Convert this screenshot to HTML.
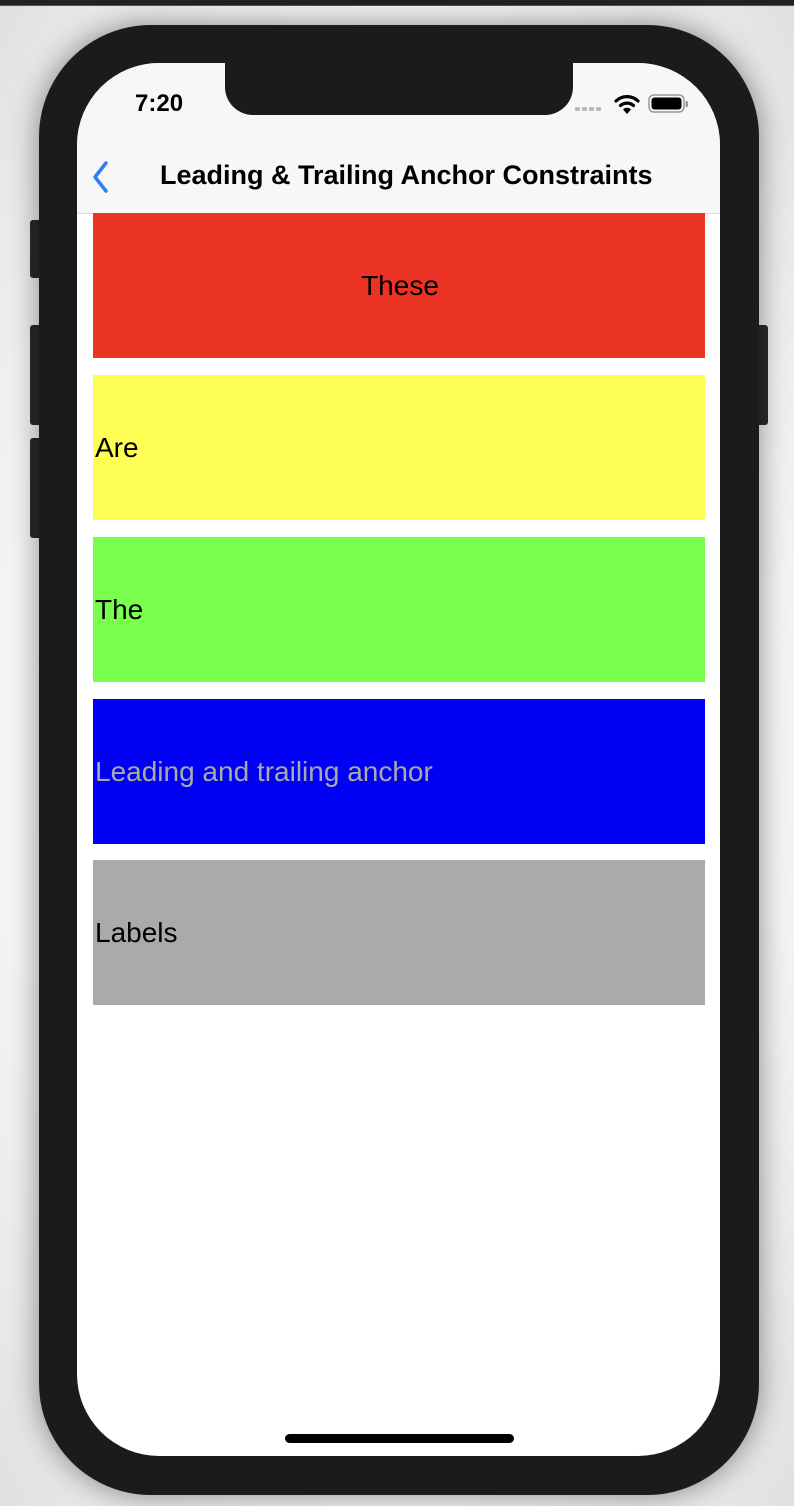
<!DOCTYPE html>
<html><head><meta charset="utf-8"><style>
html,body{margin:0;padding:0;}
body{width:794px;height:1506px;position:relative;overflow:hidden;background:radial-gradient(ellipse at center,#fff 55%,#e0e0e0 100%);font-family:"Liberation Sans",sans-serif;}
.top{position:absolute;left:0;top:0;width:794px;height:5px;background:#222;border-bottom:1px solid #555;}
.btn{position:absolute;background:#2a2a2a;border-radius:3px;}
.phone{position:absolute;left:39px;top:25px;width:720px;height:1470px;background:#1b1b1b;border-radius:112px;box-shadow:0 0 30px rgba(0,0,0,.45);}
.screen{position:absolute;left:77px;top:63px;width:643px;height:1393px;background:#fff;border-radius:82px;overflow:hidden;}
.nav{position:absolute;left:0;top:0;width:643px;height:150px;background:#f7f7f7;border-bottom:1px solid #ddd;}
.notch{position:absolute;left:148px;top:0;width:348px;height:52px;background:#1b1b1b;border-radius:0 0 28px 28px;}
.time{position:absolute;left:58px;top:27px;font-size:24px;font-weight:bold;color:#000;}
.title{position:absolute;left:83px;top:97px;font-size:27px;font-weight:bold;color:#000;white-space:nowrap;}
.box{position:absolute;left:16px;width:612px;height:145px;font-size:28px;display:flex;align-items:center;box-sizing:border-box;padding-left:2px;}
.home{position:absolute;left:208px;top:1371px;width:229px;height:9px;background:#000;border-radius:5px;}
</style></head><body>
<div class="top"></div>
<div class="btn" style="left:30px;top:220px;width:12px;height:58px"></div>
<div class="btn" style="left:30px;top:325px;width:12px;height:100px"></div>
<div class="btn" style="left:30px;top:438px;width:12px;height:100px"></div>
<div class="btn" style="left:756px;top:325px;width:12px;height:100px"></div>
<div class="phone"></div>
<div class="screen">
<div class="nav"></div>
<div class="notch"></div>
<div class="time">7:20</div>
<svg style="position:absolute;left:498px;top:43px" width="30" height="6"><g fill="#bbb"><rect x="0" y="1" width="5" height="4" rx="1"/><rect x="7" y="1" width="5" height="4" rx="1"/><rect x="14" y="1" width="5" height="4" rx="1"/><rect x="21" y="1" width="5" height="4" rx="1"/></g></svg>
<svg style="position:absolute;left:537px;top:30px" width="26" height="22" viewBox="0 0 26 22"><path d="M2 8 A16 16 0 0 1 24 8" stroke="#000" stroke-width="3.2" fill="none" stroke-linecap="round"/><path d="M6.5 12.5 A10 10 0 0 1 19.5 12.5" stroke="#000" stroke-width="3.2" fill="none" stroke-linecap="round"/><path d="M13 21 L9 16.5 A5.5 5.5 0 0 1 17 16.5 Z" fill="#000"/></svg>
<svg style="position:absolute;left:571px;top:30px" width="42" height="22"><rect x="1" y="2" width="35" height="17" rx="5" fill="none" stroke="#999" stroke-width="1.5"/><rect x="3.5" y="4.5" width="30" height="12" rx="3" fill="#000"/><rect x="37.5" y="8" width="2.5" height="6" rx="1" fill="#999"/></svg>
<svg style="position:absolute;left:13px;top:97px" width="22" height="34"><path d="M16 3 L5 17 L16 31" stroke="#2f7cf6" stroke-width="3.5" fill="none" stroke-linecap="round" stroke-linejoin="round"/></svg>
<div class="title">Leading &amp; Trailing Anchor Constraints</div>
<div class="box" style="top:150px;background:#ea3323;justify-content:center;">These</div>
<div class="box" style="top:312px;background:#fffe54;">Are</div>
<div class="box" style="top:474px;background:#78ff4e;">The</div>
<div class="box" style="top:636px;background:#0000f5;color:#aaaaaa;">Leading and trailing anchor</div>
<div class="box" style="top:797px;background:#aaaaaa;">Labels</div>
<div class="home"></div>
</div>
</body></html>
